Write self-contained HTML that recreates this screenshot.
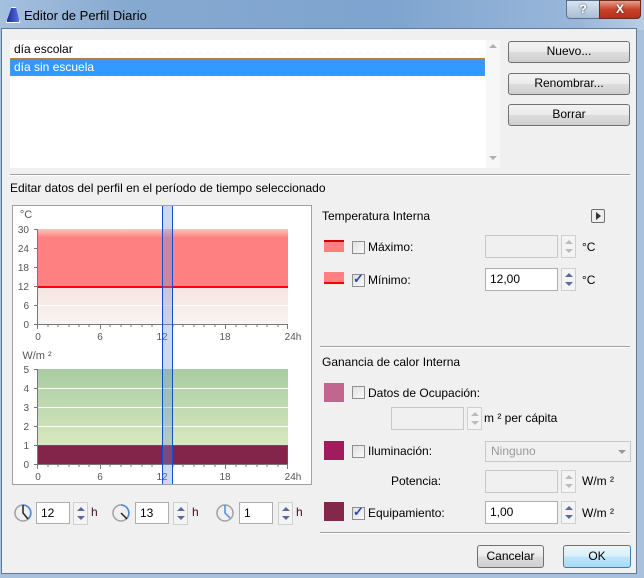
<!DOCTYPE html>
<html><head><meta charset="utf-8"><style>
*{box-sizing:border-box;margin:0;padding:0}
body{width:644px;height:578px;overflow:hidden;background:#a9c1dd;font-family:"Liberation Sans",sans-serif;font-size:12px;color:#000;position:relative}
.a{position:absolute}
.title{left:0;top:0;width:644px;height:30px;background:linear-gradient(90deg,#a6c0de 0%,#86a9d0 20%,#7ea4cf 60%,#9ab7da 90%,#b9cde5 100%)}
.client{left:1px;top:28px;width:636px;height:546px;background:#f0f0f0;border:1px solid #5f7a98}
.btn{border:1px solid #707070;border-radius:3px;background:linear-gradient(#f2f2f2 0%,#ebebeb 50%,#dddddd 51%,#cfcfcf 100%);text-align:center;line-height:19px}
.inp{background:#fff;border:1px solid #abadb3;padding-left:4px;line-height:20px}
.dis{background:#f0f0f0;border:1px solid #c8c8c8}
.spin{width:15px;height:23px;border:1px solid #cfcfcf;background:#f4f4f4}
.spin:before{content:"";position:absolute;left:3px;top:4px;border:4px solid transparent;border-bottom:4px solid #5a6a9a;border-top:0}
.spin:after{content:"";position:absolute;left:3px;bottom:4px;border:4px solid transparent;border-top:4px solid #5a6a9a;border-bottom:0}
.spin.d:before{border-bottom-color:#bbb}.spin.d:after{border-top-color:#bbb}
.cb{width:13px;height:13px;border:1px solid #8f8f8f;background:linear-gradient(135deg,#e0e0e0,#fafafa)}
.sep{height:2px;border-top:1px solid #a0a0a0;border-bottom:1px solid #fff}
.sw{width:20px;height:19px}
</style></head><body>
<div class="a title"></div>
<div class="a" style="left:6px;top:7px;width:14px;height:16px;background:linear-gradient(90deg,#1c2c9c,#5870e0);clip-path:polygon(0 100%,40% 0,70% 0,100% 100%);border:1px solid #fff"></div>
<div class="a" style="left:24px;top:8px;font-size:13px">Editor de Perfil Diario</div>
<div class="a" style="left:566px;top:0;width:34px;height:19px;border:1px solid #5a6f8a;border-radius:0 0 0 4px;background:linear-gradient(#d8e4f0,#a9bdd6);color:#fff;font-weight:bold;text-align:center;line-height:17px;text-shadow:0 0 2px #333">?</div>
<div class="a" style="left:599px;top:0;width:42px;height:19px;border:1px solid #6a2a20;border-radius:0 0 4px 0;background:linear-gradient(#e8a090,#c8412a 50%,#b83018);color:#fff;font-weight:bold;text-align:center;line-height:17px;text-shadow:0 0 2px #333">X</div>
<div class="a client"></div>

<div class="a" style="left:10px;top:40px;width:490px;height:128px;background:#fff"></div>
<div class="a" style="left:486px;top:40px;width:14px;height:128px;background:#f7f7f7"></div>
<div class="a" style="left:489px;top:44px;border:4px solid transparent;border-bottom:4px solid #b0b0b0;border-top:0"></div>
<div class="a" style="left:489px;top:156px;border:4px solid transparent;border-top:4px solid #b0b0b0;border-bottom:0"></div>
<div class="a" style="left:14px;top:42px">día escolar</div>
<div class="a" style="left:10px;top:58px;width:475px;height:18px;background:#3399ff;border:1px dotted #c08040"></div>
<div class="a" style="left:14px;top:60px;color:#fff">día sin escuela</div>
<div class="a btn" style="left:508px;top:41px;width:122px;height:22px">Nuevo...</div>
<div class="a btn" style="left:508px;top:73px;width:122px;height:22px">Renombrar...</div>
<div class="a btn" style="left:508px;top:104px;width:122px;height:22px">Borrar</div>
<div class="a sep" style="left:10px;top:174px;width:620px"></div>
<div class="a" style="left:10px;top:181px">Editar datos del perfil en el período de tiempo seleccionado</div>

<div class="a" style="left:12px;top:205px;width:300px;height:280px;background:#fff;border:1px solid #a0a0a0"></div>
<svg class="a" style="left:0;top:0" width="320" height="540">
<defs>
<linearGradient id="r" x1="0" y1="0" x2="0" y2="1"><stop offset="0" stop-color="#f7c8b8"/><stop offset="0.15" stop-color="#ff8080"/><stop offset="1" stop-color="#ff8080"/></linearGradient>
<linearGradient id="p" x1="0" y1="0" x2="0" y2="1"><stop offset="0" stop-color="#f6e4de"/><stop offset="1" stop-color="#f8f4f4"/></linearGradient>
<linearGradient id="g" x1="0" y1="0" x2="0" y2="1"><stop offset="0" stop-color="#a8cba0"/><stop offset="1" stop-color="#d8e8c0"/></linearGradient>
</defs>
<rect x="37" y="229" width="251" height="58" fill="url(#r)"/>
<rect x="37" y="287" width="251" height="37" fill="url(#p)"/>
<line x1="37" y1="305.5" x2="288" y2="305.5" stroke="#fff"/>
<line x1="37" y1="287" x2="288" y2="287" stroke="#f00" stroke-width="2"/>
<line x1="37.5" y1="229" x2="37.5" y2="324" stroke="#777"/>
<line x1="37" y1="324.5" x2="288" y2="324.5" stroke="#777"/>
<rect x="37" y="369" width="251" height="76" fill="url(#g)"/>
<g stroke="#fff"><line x1="37" y1="388.5" x2="288" y2="388.5"/><line x1="37" y1="407.5" x2="288" y2="407.5"/><line x1="37" y1="426.5" x2="288" y2="426.5"/></g>
<rect x="37.5" y="445.5" width="250" height="19" fill="#83244a" stroke="#e02020"/>
<line x1="37.5" y1="369" x2="37.5" y2="464" stroke="#777"/>
<line x1="37" y1="464.5" x2="288" y2="464.5" stroke="#777"/>
<g stroke="#777">
<path d="M37.5 324v5M48 324v3M58 324v3M69 324v3M79 324v3M89 324v3M100.5 324v5M110 324v3M121 324v3M131 324v3M142 324v3M152 324v3M162.5 324v5M173 324v3M183 324v3M194 324v3M204 324v3M215 324v3M225.5 324v5M236 324v3M246 324v3M257 324v3M267 324v3M278 324v3M287.5 324v5"/>
<path d="M37.5 464v5M48 464v3M58 464v3M69 464v3M79 464v3M89 464v3M100.5 464v5M110 464v3M121 464v3M131 464v3M142 464v3M152 464v3M162.5 464v5M173 464v3M183 464v3M194 464v3M204 464v3M215 464v3M225.5 464v5M236 464v3M246 464v3M257 464v3M267 464v3M278 464v3M287.5 464v5"/>
<path d="M34 229.5h3M34 248.5h3M34 267.5h3M34 286.5h3M34 305.5h3M34 324.5h3M34 369.5h3M34 388.5h3M34 407.5h3M34 426.5h3M34 445.5h3M34 464.5h3"/>
</g>
<g font-family="Liberation Sans" font-size="10" fill="#555" text-anchor="end">
<text x="29" y="233">30</text><text x="29" y="252">24</text><text x="29" y="271">18</text><text x="29" y="290">12</text><text x="29" y="309">6</text><text x="29" y="328">0</text>
<text x="29" y="373">5</text><text x="29" y="392">4</text><text x="29" y="411">3</text><text x="29" y="430">2</text><text x="29" y="449">1</text><text x="29" y="468">0</text>
</g>
<g font-family="Liberation Sans" font-size="10" fill="#555" text-anchor="middle">
<text x="38" y="340">0</text><text x="100" y="340">6</text><text x="162" y="340">12</text><text x="225" y="340">18</text><text x="293" y="340">24h</text>
<text x="38" y="480">0</text><text x="100" y="480">6</text><text x="162" y="480">12</text><text x="225" y="480">18</text><text x="293" y="480">24h</text>
<text x="26" y="218" font-size="11">°C</text><text x="37" y="359" font-size="11">W/m ²</text>
</g>
<rect x="162" y="206" width="10" height="278" fill="#7090d0" fill-opacity="0.35"/>
<line x1="162.5" y1="206" x2="162.5" y2="484" stroke="#1050d0"/>
<line x1="172.5" y1="206" x2="172.5" y2="484" stroke="#1050d0"/>
<g fill="none">
<circle cx="23" cy="513" r="8" stroke="#a0a0a0" stroke-width="1.5"/><path d="M23 505a8 8 0 0 1 5 14" stroke="#4a8ae0" stroke-width="1.5"/><path d="M23 505v8l5 6" stroke="#222" stroke-width="1.5"/>
<circle cx="121" cy="513" r="8" stroke="#a0a0a0" stroke-width="1.5"/><path d="M121 505a8 8 0 0 1 6 13" stroke="#4a8ae0" stroke-width="1.5"/><path d="M121 513l6 6" stroke="#222" stroke-width="1.5"/>
<circle cx="225" cy="513" r="8" stroke="#a0a0a0" stroke-width="1.5"/><path d="M225 505v8l5 5" stroke="#4a8ae0" stroke-width="1.5"/>
</g>
</svg>
<div class="a inp" style="left:36px;top:502px;width:34px;height:22px">12</div>
<div class="a spin" style="left:73px;top:502px"></div>
<div class="a" style="left:91px;top:505px;color:#401020">h</div>
<div class="a inp" style="left:135px;top:502px;width:34px;height:22px">13</div>
<div class="a spin" style="left:173px;top:502px"></div>
<div class="a" style="left:192px;top:505px;color:#401020">h</div>
<div class="a inp" style="left:239px;top:502px;width:34px;height:22px">1</div>
<div class="a spin" style="left:278px;top:502px"></div>
<div class="a" style="left:296px;top:505px;color:#401020">h</div>

<div class="a" style="left:322px;top:209px">Temperatura Interna</div>
<div class="a" style="left:591px;top:209px;width:14px;height:14px;border:1px solid #707070;border-radius:2px;background:#eee"></div>
<div class="a" style="left:596px;top:212px;border:4px solid transparent;border-left:5px solid #333;border-right:0"></div>

<div class="a sw" style="left:324px;top:240px;height:12px;background:#ff8080;border-top:2px solid #c00"></div>
<div class="a cb" style="left:352px;top:241px"></div>
<div class="a" style="left:368px;top:240px">Máximo:</div>
<div class="a dis" style="left:485px;top:235px;width:73px;height:23px"></div>
<div class="a spin d" style="left:561px;top:235px"></div>
<div class="a" style="left:582px;top:240px">°C</div>

<div class="a sw" style="left:324px;top:272px;height:12px;background:#ff8080;border-bottom:2px solid #f00"></div>
<div class="a cb" style="left:352px;top:274px"></div>
<div class="a" style="left:353px;top:271px;color:#2a4ab0;font-size:13px;font-weight:bold">✓</div>
<div class="a" style="left:368px;top:273px">Mínimo:</div>
<div class="a inp" style="left:485px;top:268px;width:73px;height:23px">12,00</div>
<div class="a spin" style="left:561px;top:268px"></div>
<div class="a" style="left:582px;top:273px">°C</div>

<div class="a sep" style="left:320px;top:346px;width:310px"></div>
<div class="a" style="left:322px;top:355px">Ganancia de calor Interna</div>

<div class="a sw" style="left:324px;top:383px;background:#c0668f"></div>
<div class="a cb" style="left:352px;top:386px"></div>
<div class="a" style="left:368px;top:386px">Datos de Ocupación:</div>
<div class="a dis" style="left:391px;top:407px;width:73px;height:23px"></div>
<div class="a spin d" style="left:467px;top:407px"></div>
<div class="a" style="left:484px;top:411px">m ² per cápita</div>

<div class="a sw" style="left:324px;top:441px;background:#a01c5c"></div>
<div class="a cb" style="left:352px;top:445px"></div>
<div class="a" style="left:368px;top:444px">Iluminación:</div>
<div class="a dis" style="left:485px;top:441px;width:146px;height:21px;color:#999;padding-left:5px;line-height:19px">Ninguno</div>
<div class="a" style="left:618px;top:450px;border:4px solid transparent;border-top:4px solid #999;border-bottom:0"></div>

<div class="a" style="left:391px;top:474px">Potencia:</div>
<div class="a dis" style="left:485px;top:470px;width:73px;height:23px"></div>
<div class="a spin d" style="left:561px;top:470px"></div>
<div class="a" style="left:582px;top:474px">W/m ²</div>

<div class="a sw" style="left:324px;top:502px;background:#82284a"></div>
<div class="a cb" style="left:352px;top:507px"></div>
<div class="a" style="left:353px;top:504px;color:#2a4ab0;font-size:13px;font-weight:bold">✓</div>
<div class="a" style="left:368px;top:506px">Equipamiento:</div>
<div class="a inp" style="left:485px;top:501px;width:73px;height:23px">1,00</div>
<div class="a spin" style="left:561px;top:501px"></div>
<div class="a" style="left:582px;top:506px">W/m ²</div>

<div class="a sep" style="left:320px;top:532px;width:310px"></div>
<div class="a btn" style="left:477px;top:545px;width:67px;height:23px;line-height:21px">Cancelar</div>
<div class="a btn" style="left:563px;top:545px;width:68px;height:23px;line-height:21px;border-color:#3c7fb1;background:linear-gradient(#eaf6fd,#d9f0fc 50%,#bee6fd 51%,#a7d9f5)">OK</div>
</body></html>
